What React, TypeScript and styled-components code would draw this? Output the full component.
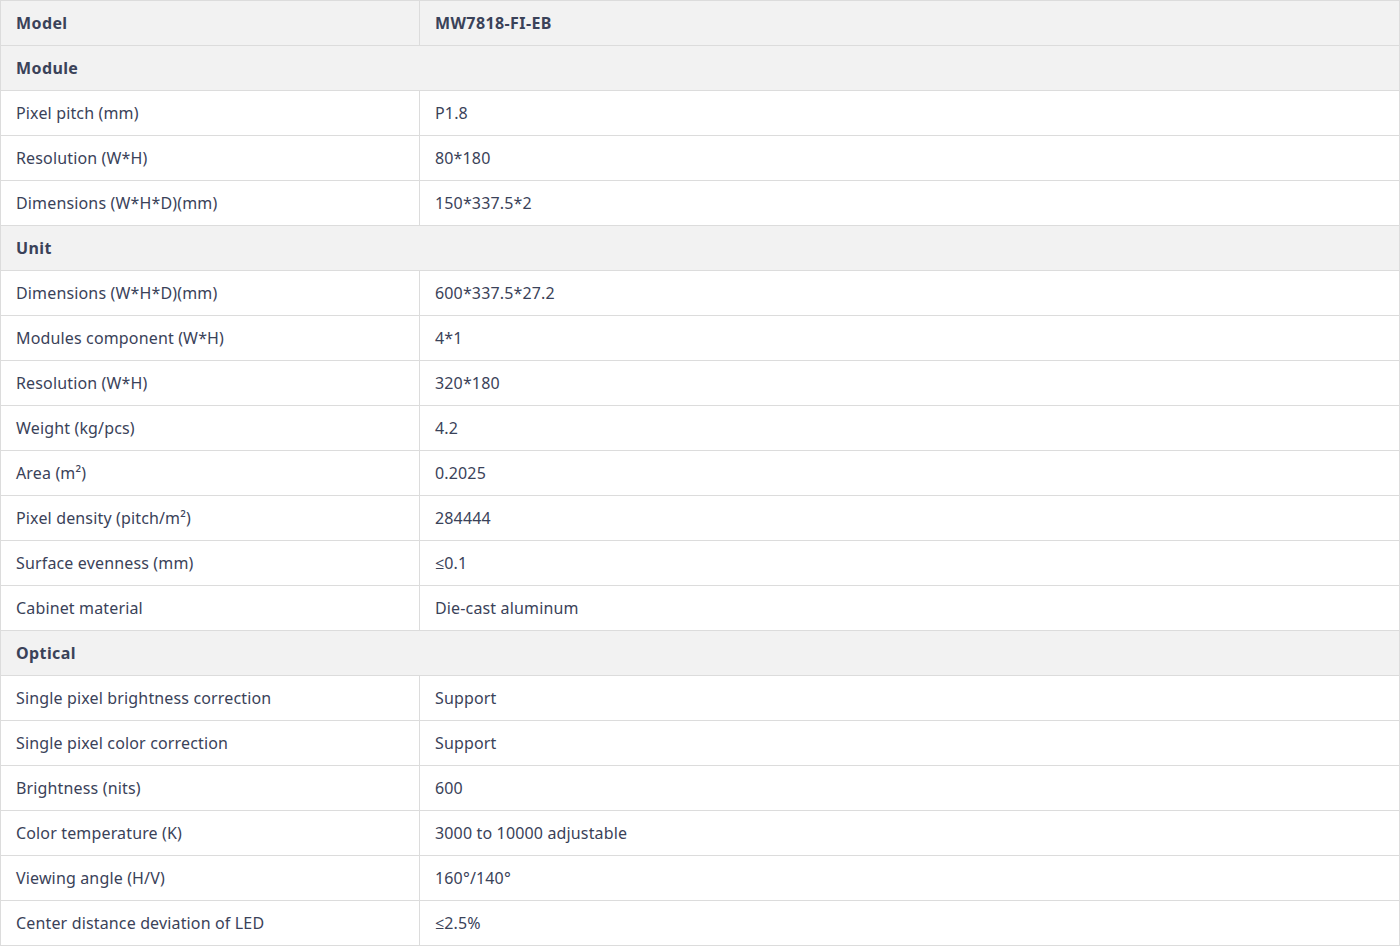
import React from 'react';
import styled, { createGlobalStyle } from 'styled-components';

type Spec = { label: string; value?: string; section?: boolean; bold?: boolean };

const specs: Spec[] = [
  { label: 'Model', value: 'MW7818-FI-EB', section: true, bold: true },
  { label: 'Module', section: true },
  { label: 'Pixel pitch (mm)', value: 'P1.8' },
  { label: 'Resolution (W*H)', value: '80*180' },
  { label: 'Dimensions (W*H*D)(mm)', value: '150*337.5*2' },
  { label: 'Unit', section: true },
  { label: 'Dimensions (W*H*D)(mm)', value: '600*337.5*27.2' },
  { label: 'Modules component (W*H)', value: '4*1' },
  { label: 'Resolution (W*H)', value: '320*180' },
  { label: 'Weight (kg/pcs)', value: '4.2' },
  { label: 'Area (m²)', value: '0.2025' },
  { label: 'Pixel density (pitch/m²)', value: '284444' },
  { label: 'Surface evenness (mm)', value: '≤0.1' },
  { label: 'Cabinet material', value: 'Die-cast aluminum' },
  { label: 'Optical', section: true },
  { label: 'Single pixel brightness correction', value: 'Support' },
  { label: 'Single pixel color correction', value: 'Support' },
  { label: 'Brightness (nits)', value: '600' },
  { label: 'Color temperature (K)', value: '3000 to 10000 adjustable' },
  { label: 'Viewing angle (H/V)', value: '160°/140°' },
  { label: 'Center distance deviation of LED', value: '≤2.5%' },
];

const GlobalStyle = createGlobalStyle`
  body {
    margin: 0;
    background: #fff;
    font-family: "Noto Sans", "Open Sans", sans-serif;
  }
`;

export default function App() {
  return (
    <>
      <GlobalStyle />
      <SpecTable>
        <colgroup>
          <col style={{ width: 419 }} />
          <col />
        </colgroup>
        <tbody>
          {specs.map((s, i) =>
            s.section && !s.value ? (
              <Row key={i} $shaded>
                <Cell colSpan={2} $bold>
                  {s.label}
                </Cell>
              </Row>
            ) : (
              <Row key={i} $shaded={s.section}>
                <Cell $bold={s.bold}>{s.label}</Cell>
                <Cell $bold={s.bold}>{s.value}</Cell>
              </Row>
            ),
          )}
        </tbody>
      </SpecTable>
    </>
  );
}

const SpecTable = styled.table`
  width: 1400px;
  border-collapse: collapse;
  table-layout: fixed;
`;

const Row = styled.tr<{ $shaded?: boolean }>`
  height: 45px;
  background: ${p => (p.$shaded ? '#f2f2f2' : '#fff')};
`;

const Cell = styled.td<{ $bold?: boolean }>`
  border: 1px solid #dcdcdc;
  padding: 0 15px;
  font-size: 16px;
  line-height: 22px;
  color: #3a4259;
  font-weight: ${p => (p.$bold ? 700 : 400)};
  letter-spacing: ${p => (p.$bold ? '0.4px' : '0.15px')};
  vertical-align: middle;
  white-space: nowrap;
`;
